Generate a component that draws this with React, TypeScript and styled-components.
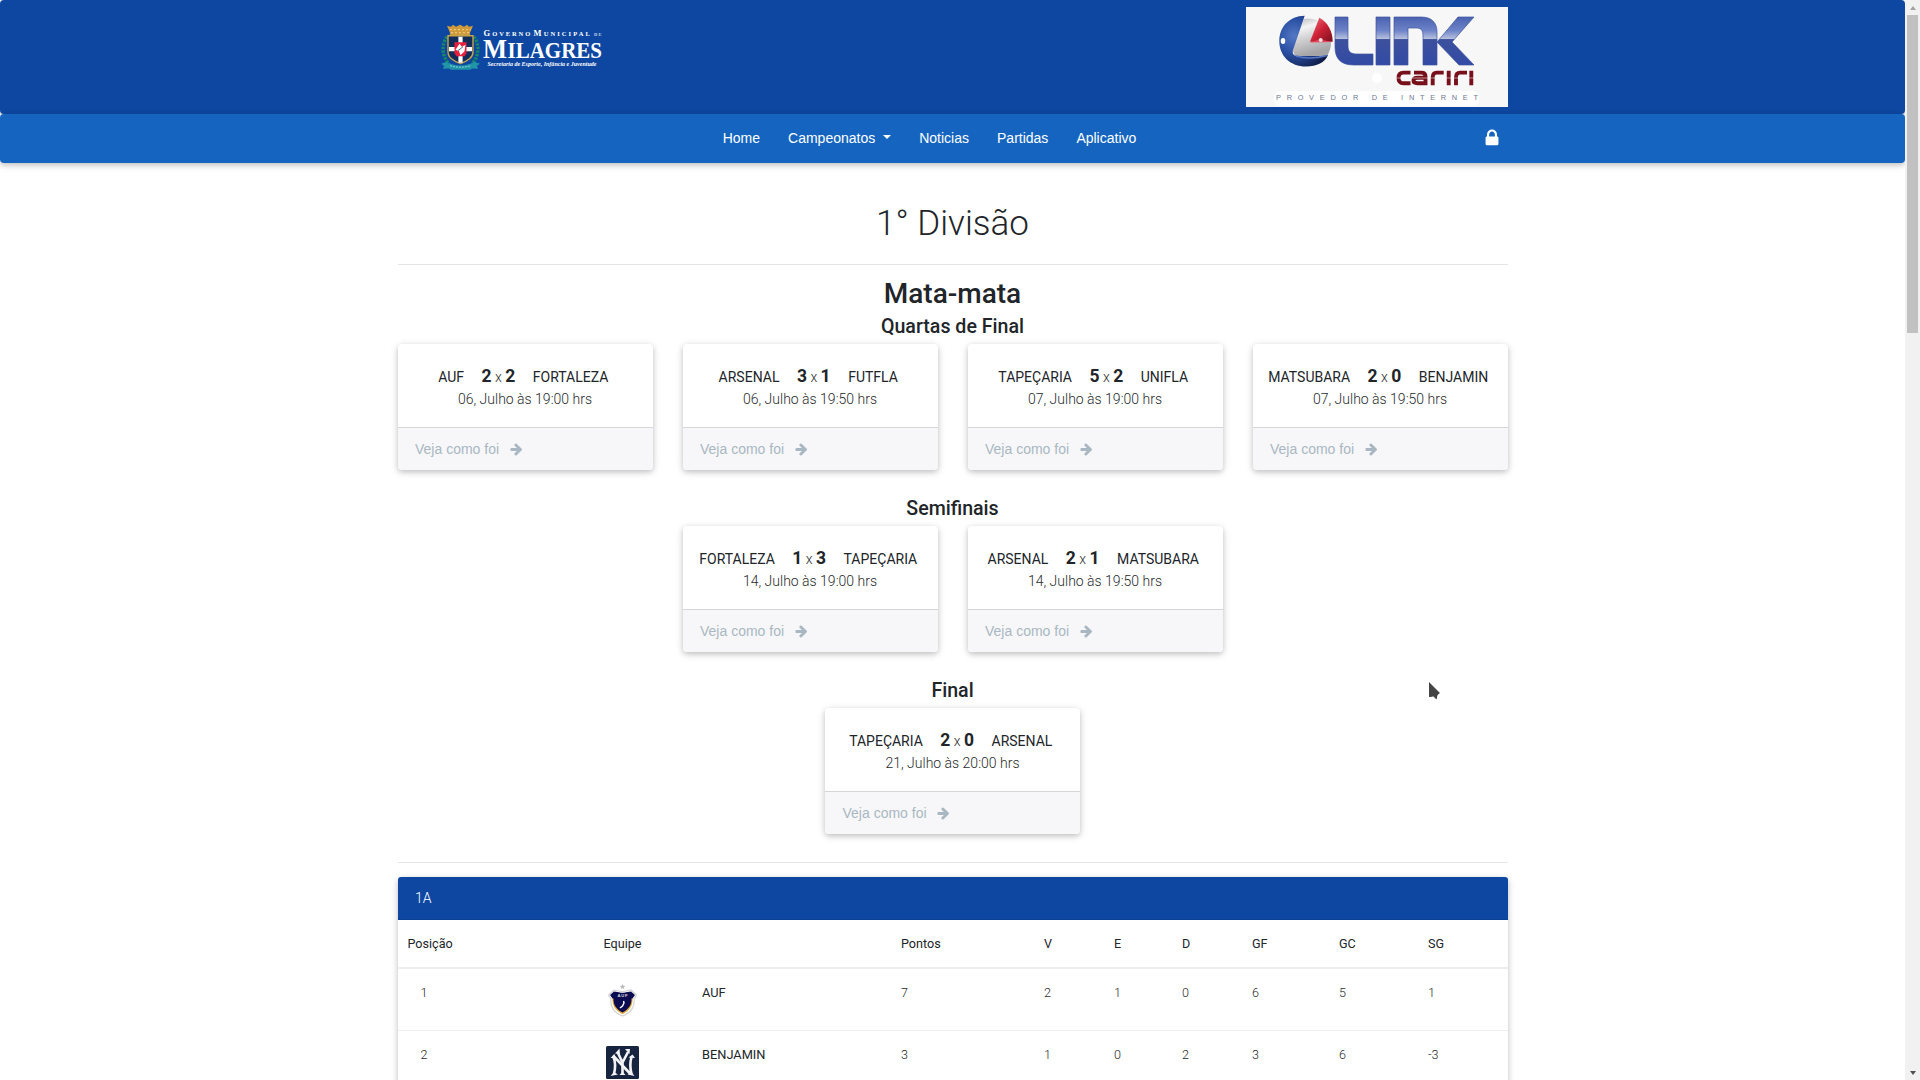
import React from "react";
import styled, { createGlobalStyle } from "styled-components";

const roboto = `Roboto, "Liberation Sans", sans-serif`;
const arial = `"Liberation Sans", Arial, sans-serif`;
const depth = "0 2px 5px 0 rgba(0,0,0,.16), 0 2px 10px 0 rgba(0,0,0,.12)";

const Global = createGlobalStyle`
  * { box-sizing: border-box; }
  html, body { margin: 0; height: 1080px; overflow: hidden; background: #fff; }
  body { font-family: ${roboto}; font-weight: 300; color: #212529; line-height: 1.5; }
`;

const Viewport = styled.div`
  display: flex;
  height: 1080px;
  overflow: hidden;
`;
const Page = styled.div`
  flex: 1;
  min-width: 0;
  height: 1080px;
  overflow: hidden;
`;
const Container = styled.div`
  width: 1110px;
  margin: 0 auto;
`;
const TopBar = styled.header`
  height: 114px;
  background: #0d47a1;
  border-radius: 4px;
  box-shadow: ${depth};
`;
const Brands = styled(Container)`
  display: flex;
  justify-content: space-between;
  padding: 7px 0 0 42.5px;
`;
const CityLogo = styled.svg`
  display: block;
  margin-top: 14px;
`;
const Sponsor = styled.svg`
  display: block;
  width: 262px;
  height: 100px;
`;
const NavBar = styled.nav`
  height: 49px;
  background: #1565c0;
  border-radius: 4px;
  box-shadow: ${depth};
`;
const NavRow = styled(Container)`
  display: flex;
  align-items: center;
  height: 49px;
  padding: 0 6px 0 325.2px;
`;
const NavLink = styled.a`
  display: flex;
  align-items: center;
  font: 14px/21px ${arial};
  color: #fff;
  margin-right: 28px;
`;
const Caret = styled.span`
  margin: 0 0 3px 8px;
  border: 4.2px solid transparent;
  border-top-color: #fff;
  border-bottom: 0;
`;
const LockSlot = styled.span`
  display: flex;
  margin: 0 0 1px auto;
`;
const Title = styled.h1`
  margin: 0;
  padding-top: 37px;
  height: 101px;
  font-size: 35px;
  line-height: 48px;
  font-weight: 300;
  text-align: center;
`;
const Rule = styled.hr<{ $gap?: number }>`
  margin: ${(p) => p.$gap ?? 0}px 0 0;
  border: 0;
  border-top: 1px solid rgba(0, 0, 0, .1);
`;
const Heading = styled.h2`
  margin: 0;
  padding-top: 10px;
  font-size: 28px;
  line-height: 38px;
  font-weight: 500;
  text-align: center;
`;
const Stage = styled.h3<{ $first?: boolean }>`
  margin: 0;
  height: ${(p) => (p.$first ? 31 : 56)}px;
  padding-top: ${(p) => (p.$first ? 2 : 27)}px;
  font-size: 19.6px;
  line-height: 24px;
  font-weight: 500;
  text-align: center;
`;
const Matches = styled.div`
  display: flex;
  justify-content: center;
  gap: 30px;
`;
const Card = styled.article`
  width: 255px;
  height: 126px;
  border-radius: 4px;
  background: #fff;
  box-shadow: ${depth};
  overflow: hidden;
`;
const CardBody = styled.div`
  height: 83px;
  padding-top: 20px;
  text-align: center;
`;
const ScoreLine = styled.div`
  display: flex;
  justify-content: center;
  align-items: baseline;
  height: 25px;
  padding-right: 3.5px;
  line-height: 24px;
  font-size: 14px;
`;
const Team = styled.span`
  font-weight: 400;
  color: #212529;
`;
const Score = styled.span`
  margin: 0 17.5px;
  white-space: pre;
  color: #333;
  b { font-size: 17.5px; font-weight: 700; color: #212529; }
`;
const When = styled.div`
  font-size: 14px;
  line-height: 21px;
  color: #292b2c;
`;
const CardFooter = styled.a`
  display: flex;
  align-items: center;
  height: 43px;
  padding-left: 17.5px;
  gap: 9.6px;
  border-top: 1px solid #d5d6da;
  background: #f7f7f9;
  color: #a9b7c2;
  font: 14px/21px ${arial};
`;
const TablePanel = styled.section`
  margin-top: 14px;
  border-radius: 4px;
  background: #fff;
  box-shadow: ${depth};
`;
const PanelTitle = styled.div`
  height: 43px;
  padding: 0 17.5px;
  border-radius: 3px 3px 0 0;
  border-bottom: 1px solid #0c4091;
  background: #0d47a1;
  color: #fff;
  font-size: 14px;
  line-height: 42px;
`;
const Standings = styled.table`
  width: 100%;
  table-layout: fixed;
  border-collapse: collapse;
  font-size: 12.6px;
`;
const HeadCell = styled.th`
  height: 48px;
  padding: 1px 0 0 10px;
  text-align: left;
  font-weight: 400;
  color: #212529;
  border-bottom: 2px solid #eceeef;
  &:nth-child(2) { padding-left: 11px; }
`;
const Cell = styled.td<{ $strong?: boolean; $indent?: number; $top?: number }>`
  height: 62px;
  padding: ${(p) => p.$top ?? 14}px 0 0 ${(p) => p.$indent ?? 10}px;
  vertical-align: top;
  line-height: 20px;
  border-bottom: 1px solid #eceeef;
  font-size: ${(p) => (p.$strong ? "12.8px" : "12.6px")};
  font-weight: ${(p) => (p.$strong ? 400 : 300)};
  color: ${(p) => (p.$strong ? "#212529" : "#292b2c")};
  svg { display: block; }
`;
const ScrollBar = styled.aside`
  display: flex;
  flex-direction: column;
  align-items: center;
  width: 15px;
  height: 1080px;
  background: #f1f1f1;
`;
const ScrollArrow = styled.span<{ $down?: boolean }>`
  display: flex;
  align-items: center;
  justify-content: center;
  height: 15px;
  margin-top: ${(p) => (p.$down ? "auto" : "0")};
  &::after {
    content: "";
    border: 3.5px solid transparent;
    ${(p) => (p.$down ? "border-top: 4px solid #505050; border-bottom: 0;" : "border-bottom: 4px solid #a3a3a3; border-top: 0;")}
  }
`;
const Thumb = styled.span`
  width: 11px;
  height: 318px;
  background: #c1c1c1;
`;
const Pointer = styled.svg`
  position: absolute;
  left: 1426px;
  top: 679px;
`;

const ArrowRight = () => (
  <svg width="14" height="14" viewBox="0 0 1792 1792" fill="currentColor">
    <path d="M1664 960q0 54-37 91l-651 651q-39 37-91 37-51 0-90-37l-75-75q-38-38-38-91t38-91l293-293h-704q-52 0-84.500-37.500t-32.500-90.500v-128q0-53 32.500-90.500t84.500-37.500h704l-293-294q-38-36-38-90t38-90l75-75q38-38 90-38 53 0 91 38l651 651q37 35 37 90z" />
  </svg>
);
const Lock = () => (
  <svg width="20" height="20" viewBox="0 0 1792 1792" fill="#fff">
    <path d="M640 768h512v-192q0-106-75-181t-181-75-181 75-75 181v192zm832 96v576q0 40-28 68t-68 28h-960q-40 0-68-28t-28-68v-576q0-40 28-68t68-28h32v-192q0-184 132-316t316-132 316 132 132 316v192h32q40 0 68 28t28 68z" />
  </svg>
);

const Milagres = () => (
  <CityLogo width="200" height="52" viewBox="0 0 200 52">
    <g transform="translate(0 -.3)">
      <g fill="none" stroke="#168a63" strokeWidth="3.400" strokeDasharray="2.400 1.200">
        <path d="M7 16C1 24 2 36 9 43" />
        <path d="M34 16C40 24 39 36 32 43" />
      </g>
      <path d="M7 5l4 1 2-2 3 2 4-2 4 2 3-2 2 2 4-1-3 7v5H10v-5z" fill="#cf9a3b" />
      <path d="M10 9h21M11 12h19" stroke="#f4d28a" strokeWidth="1" strokeDasharray="2 2" />
      <path d="M8 15h25v16c0 6-5 9-12.500 12C13 40 8 37 8 31z" fill="#122d59" stroke="#c7a34d" strokeWidth="1.400" />
      <path d="M20.500 16v26M9 28.500h23" stroke="#fff" strokeWidth="4.200" />
      <path d="M14.500 21.500h12v11l-2 3h-8l-2-3z" fill="#e4203c" />
      <path d="M15.500 29l4-6 2.500 3 3.500-2-1 6.500-4 4-1.500-4z" fill="#fff" />
      <path d="M18 30l5-4" stroke="#456b9b" />
      <path d="M1 43l6-2c7 5 20 5 27 0l6 2-3 2 1 3c-4 0-6-1-8 1H11c-2-2-4-1-8-1l1-3z" fill="#2294a8" />
      <path d="M10 45c7 2 14 2 21 0" stroke="#8ad3d5" fill="none" strokeDasharray="2 1" />
    </g>
    <g fill="#fff" fontFamily="Liberation Serif, serif" fontWeight="700">
      <text x="43.500" y="14.700" fontSize="8.500">G</text>
      <text x="52.200" y="14.700" fontSize="6.500" textLength="38">OVERNO</text>
      <text x="93.500" y="14.700" fontSize="8.500">M</text>
      <text x="103.800" y="14.700" fontSize="6.500" textLength="46">UNICIPAL</text>
      <text x="154" y="14.700" fontSize="4.500" textLength="7.500" opacity=".75">DE</text>
      <text x="43" y="36.700" fontSize="28" textLength="24" lengthAdjust="spacingAndGlyphs">M</text>
      <text x="67.500" y="36.700" fontSize="23.500" textLength="94.500" lengthAdjust="spacingAndGlyphs">ILAGRES</text>
      <text x="47.500" y="45.300" fontSize="6" fontStyle="italic" textLength="109">Secretaria de Esporte, Infância e Juventude</text>
    </g>
  </CityLogo>
);

const LinkCariri = () => (
  <Sponsor viewBox="0 0 262 100">
    <defs>
      <linearGradient id="steel" x1="0" y1="10" x2="0" y2="58" gradientUnits="userSpaceOnUse">
        <stop offset="0" stopColor="#4a62b0" />
        <stop offset=".28" stopColor="#6d83c8" />
        <stop offset=".45" stopColor="#b5bfdd" />
        <stop offset=".47" stopColor="#3c509d" />
        <stop offset="1" stopColor="#334ba6" />
      </linearGradient>
      <radialGradient id="globe" cx=".3" cy=".4" r=".75">
        <stop offset="0" stopColor="#5478c4" />
        <stop offset=".45" stopColor="#2a50a4" />
        <stop offset="1" stopColor="#101d49" />
      </radialGradient>
      <linearGradient id="silver" x1="0" y1="0" x2=".3" y2="1">
        <stop offset="0" stopColor="#b4b4b8" />
        <stop offset=".3" stopColor="#f4f4f4" />
        <stop offset=".6" stopColor="#cfcfd2" />
        <stop offset="1" stopColor="#a5a5a8" />
      </linearGradient>
      <linearGradient id="ruby" x1="0" y1="0" x2="1" y2="1">
        <stop offset="0" stopColor="#ef7880" />
        <stop offset=".5" stopColor="#ce2237" />
        <stop offset="1" stopColor="#79101d" />
      </linearGradient>
    </defs>
    <rect width="262" height="100" fill="#f7f7f7" />
    <rect x="28" y="84" width="205" height="15" rx="6" fill="#fff" />
    <path d="M58 12C66 10 77 14 81 22c6 9 5 19 0 27H49L46 42z" fill="url(#silver)" />
    <path d="M58.700 8.700C43 9 33.300 20 33.300 34c0 15 11 25.500 26.700 25.500 11 0 19-4 22-11.500l-5 1H52c-4 0-6-2-5-6z" fill="url(#globe)" />
    <path d="M50 49c10 3 22 2 31-.5" stroke="#5577c4" strokeWidth="1.500" fill="none" />
    <ellipse cx="37" cy="34" rx="2.300" ry="3" fill="#fff" />
    <path d="M73.300 10.700c8 4 13.400 13 13.400 24H64z" fill="url(#ruby)" />
    <path d="M64 35.500l9-3 14 2.500z" fill="#e5465b" />
    <circle cx="74.700" cy="33" r="2" fill="#fff" opacity=".85" />
    <g fill="url(#steel)" stroke="#3c539e" strokeWidth=".7">
      <path d="M89 10h13v29c0 6 3 8 9 8h16v11h-19c-13 0-19-6-19-18z" />
      <path d="M130 10h14v48h-14z" />
      <path d="M148 10h27c11 0 16 6 16 15v33h-14V29c0-6-2-8-7-8h-8v37h-14z" />
      <path d="M212 10h16l-22 25 22 23h-15l-22-23z" />
    </g>
    <circle cx="131" cy="71" r="5" fill="#fff" />
    <g fill="none" stroke="#77101a" strokeWidth="3.900">
      <path d="M164.500 65.600h-7c-4 0-5 2-5 5.300s1 5.300 5 5.300h7" />
      <path d="M168 65.600h7.500c3 0 4 2 4 4v6.600h-8c-3 0-4-1-4-2.700s1-2.700 4-2.700h8" />
      <path d="M186.700 78.300v-8c0-3 1-4.700 4-4.700h7M202.700 63.700v14.600M210 78.300v-8c0-3 1-4.700 4-4.700h7M225.300 63.700v14.600" />
    </g>
    <path d="M150 71h78" stroke="#fff" strokeWidth="1" opacity=".5" />
    <text x="30" y="92.700" fill="#6d7896" fontFamily="Liberation Sans, sans-serif" fontSize="7.400" textLength="202" lengthAdjust="spacing">PROVEDOR DE INTERNET</text>
  </Sponsor>
);

const AufCrest = () => (
  <svg width="33" height="38" viewBox="0 0 33 38">
    <path d="M16.500 0l.8 1.800 2 .1-1.500 1.300.5 2-1.800-1.100-1.800 1.100.5-2-1.500-1.300 2-.1z" fill="#bbb" />
    <path d="M8 6l5 1q3.500 1 7 0l5-1 5.500 5-2.500 4c1 9-4 14-11.500 17C9 29 4 24 5 15l-2.500-4z" fill="#fff" stroke="#d4d4d4" strokeWidth="1.200" />
    <path d="M6.500 14c-.5 8 3 12.500 10 16.300C23.500 26.500 27 22 26.500 14z" fill="#e4a934" />
    <path d="M8 7.500l5 .8q3.500 1 7 0l5-.8 4 3.500-2.500 3.500h-1c.3 6-2.500 10.500-9 14-6.500-3.500-9.300-8-9-14h-1L4 11z" fill="#0b0b52" />
    <text x="16.900" y="13" textAnchor="middle" fontFamily="Liberation Sans" fontWeight="700" fontSize="4.200" fill="#ddd" letterSpacing=".8">AUF</text>
    <path d="M17.500 17l.5 2-1.500 3-2.500 2" stroke="#fff" strokeWidth="1.400" fill="none" />
  </svg>
);
const YankeesCrest = () => (
  <svg width="33" height="33" viewBox="0 0 33 33">
    <rect width="33" height="33" rx="1.500" fill="#16243f" />
    <g fill="none" stroke="#f4f4f4" strokeWidth="2.600">
      <path d="M8 28c1.500-6 1.500-12-.5-17M7 9.500l17 18M25.500 28c-1.500-6-1.500-12 0-17" />
      <path d="M11.500 6l5 10.500V27M22 6l-5.500 10.500" />
    </g>
    <path d="M4.500 12l4-4 1 4zM4.500 30l3.500-4 4 2.500zM21.500 28.500l4-2.500 3 4zM22.500 11.500l4-3 2.500 3.500zM13.500 29l3-3.500 3 3.500zM9 7.500l4.500-5L14 8zM19 3l5 0-.5 5z" fill="#f4f4f4" />
  </svg>
);

type Match = [string, number, number, string, string];
const quarters: Match[] = [
  ["AUF", 2, 2, "FORTALEZA", "06, Julho às 19:00 hrs"],
  ["ARSENAL", 3, 1, "FUTFLA", "06, Julho às 19:50 hrs"],
  ["TAPEÇARIA", 5, 2, "UNIFLA", "07, Julho às 19:00 hrs"],
  ["MATSUBARA", 2, 0, "BENJAMIN", "07, Julho às 19:50 hrs"],
];
const semis: Match[] = [
  ["FORTALEZA", 1, 3, "TAPEÇARIA", "14, Julho às 19:00 hrs"],
  ["ARSENAL", 2, 1, "MATSUBARA", "14, Julho às 19:50 hrs"],
];
const final: Match[] = [["TAPEÇARIA", 2, 0, "ARSENAL", "21, Julho às 20:00 hrs"]];

const Round = ({ matches }: { matches: Match[] }) => (
  <Matches>
    {matches.map(([home, a, b, away, when]) => (
      <Card key={home}>
        <CardBody>
          <ScoreLine>
            <Team>{home}</Team>
            <Score><b>{a}</b> x <b>{b}</b></Score>
            <Team>{away}</Team>
          </ScoreLine>
          <When>{when}</When>
        </CardBody>
        <CardFooter>Veja como foi<ArrowRight /></CardFooter>
      </Card>
    ))}
  </Matches>
);

const columns = [195, 99.5, 199, 143, 70, 68, 70, 87, 89, 89.5];
const heads = ["Posição", "Equipe", "", "Pontos", "V", "E", "D", "GF", "GC", "SG"];
const teams = [
  { name: "AUF", crest: <AufCrest />, stats: [7, 2, 1, 0, 6, 5, 1] },
  { name: "BENJAMIN", crest: <YankeesCrest />, stats: [3, 1, 0, 2, 3, 6, -3] },
];

export default function App() {
  return (
    <>
      <Global />
      <Viewport>
        <Page>
          <TopBar><Brands><Milagres /><LinkCariri /></Brands></TopBar>
          <NavBar>
            <NavRow>
              <NavLink>Home</NavLink>
              <NavLink>Campeonatos<Caret /></NavLink>
              <NavLink>Noticias</NavLink>
              <NavLink>Partidas</NavLink>
              <NavLink>Aplicativo</NavLink>
              <LockSlot><Lock /></LockSlot>
            </NavRow>
          </NavBar>
          <Container as="main">
            <Title>1° Divisão</Title>
            <Rule />
            <Heading>Mata-mata</Heading>
            <Stage $first>Quartas de Final</Stage>
            <Round matches={quarters} />
            <Stage>Semifinais</Stage>
            <Round matches={semis} />
            <Stage>Final</Stage>
            <Round matches={final} />
            <Rule $gap={28} />
            <TablePanel>
              <PanelTitle>1A</PanelTitle>
              <Standings>
                <colgroup>{columns.map((w, i) => <col key={i} style={{ width: w }} />)}</colgroup>
                <thead><tr>{heads.map((h, i) => <HeadCell key={i}>{h}</HeadCell>)}</tr></thead>
                <tbody>
                  {teams.map((t, i) => (
                    <tr key={t.name}>
                      <Cell $indent={23}>{i + 1}</Cell>
                      <Cell $indent={13} $top={15}>{t.crest}</Cell>
                      <Cell $strong>{t.name}</Cell>
                      {t.stats.map((s, k) => <Cell key={k}>{s}</Cell>)}
                    </tr>
                  ))}
                </tbody>
              </Standings>
            </TablePanel>
          </Container>
        </Page>
        <ScrollBar>
          <ScrollArrow />
          <Thumb />
          <ScrollArrow $down />
        </ScrollBar>
      </Viewport>
      <Pointer width="16" height="26" viewBox="0 0 16 26">
        <path d="M3 3v16l4-1 4 4 1-5 2-3z" fill="#444" stroke="#fff" strokeWidth="1.500" />
        <path d="M3 3v15l5-1 3 3v-4l3-2z" fill="#444" />
      </Pointer>
    </>
  );
}
